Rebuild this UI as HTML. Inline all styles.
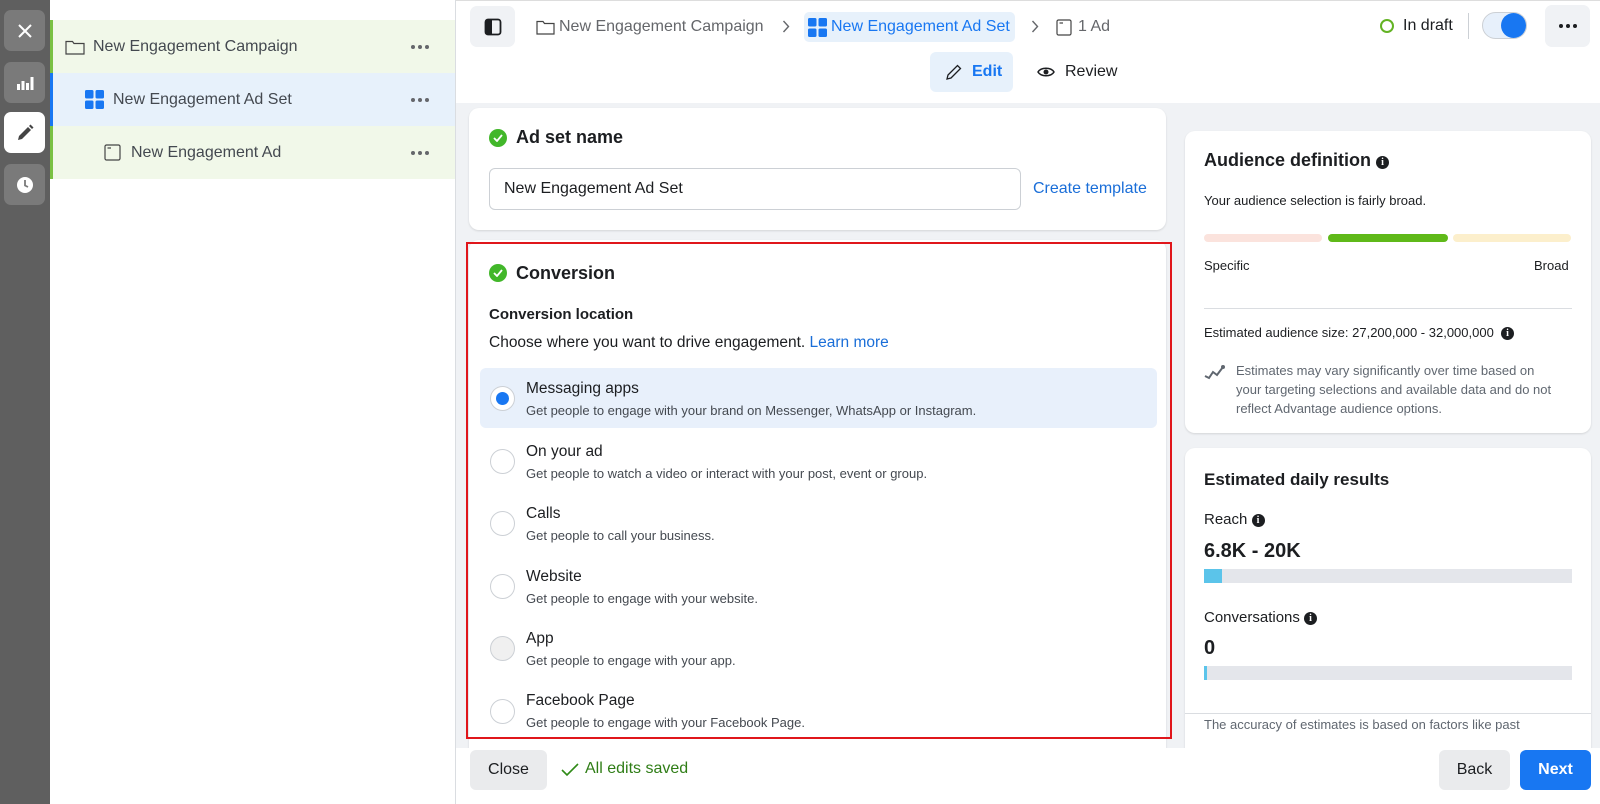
<!DOCTYPE html>
<html><head><meta charset="utf-8"><style>
*{box-sizing:border-box;margin:0;padding:0}
body{width:1600px;height:804px;overflow:hidden;font-family:"Liberation Sans",sans-serif;color:#1c1e21;background:#fff;position:relative}
.a{position:absolute}
.sb{left:0;top:0;width:50px;height:804px;background:#5f5f5f}
.sbb{left:4px;width:41px;height:41px;border-radius:7px;background:#7a7a7a;display:flex;align-items:center;justify-content:center}
.tree{left:50px;top:0;width:406px;height:804px;background:#fff;border-right:1px solid #dadde1}
.row{left:0;width:405px;font-size:16px;color:#444950;display:flex;align-items:center}
.dots{position:absolute;right:26px;top:50%;transform:translateY(-50%);display:flex;gap:3px}
.dots i{width:4px;height:4px;border-radius:50%;background:#65676b;display:block}
.main{left:456px;top:0;width:1144px;height:804px;background:#f0f2f5}
.hdr{left:456px;top:0;width:1144px;height:103px;background:#fff;border-top:1px solid #ddd}
.card{background:#fff;border-radius:10px;box-shadow:0 1px 2px rgba(0,0,0,.12)}
.t16{font-size:16px}
.chk{width:18px;height:18px;border-radius:50%;background:#42b72a;display:flex;align-items:center;justify-content:center}
.radio{width:25px;height:25px;border-radius:50%;border:1px solid #ccd0d5;background:#fff}
.opt .tt{font-size:15.5px;color:#1c1e21}
.opt .ds{font-size:13px;color:#444950}
.info{display:inline-block;width:13px;height:13px;border-radius:50%;background:#1c1e21;color:#fff;font-size:10px;font-weight:bold;text-align:center;line-height:13px;font-family:"Liberation Serif",serif;vertical-align:1px}
</style></head><body>
<div class="a main"></div>
<div class="a hdr"></div>
<div class="a sb"></div>
<div class="a sbb" style="top:10px"><svg width="16" height="16" viewBox="0 0 16 16"><path d="M2 2L14 14M14 2L2 14" stroke="#fff" stroke-width="2"/></svg></div>
<div class="a sbb" style="top:62px"><svg width="18" height="16" viewBox="0 0 18 16"><rect x="1" y="9" width="3" height="6" fill="#fff"/><rect x="5.5" y="6" width="3" height="9" fill="#fff"/><rect x="10" y="8" width="3" height="7" fill="#fff"/><rect x="14.5" y="2" width="3" height="13" fill="#fff"/></svg></div>
<div class="a sbb" style="top:112px;background:#fff"><svg width="18" height="18" viewBox="0 0 18 18"><path d="M2 16L3 12L12 3L15 6L6 15Z" fill="#444"/><path d="M13 2L14.5 .5L17.5 3.5L16 5Z" fill="#444"/></svg></div>
<div class="a sbb" style="top:164px"><svg width="18" height="18" viewBox="0 0 18 18"><circle cx="9" cy="9" r="8" fill="#fff"/><path d="M9 4V9.5L12 11" stroke="#7a7a7a" stroke-width="1.8" fill="none"/></svg></div>

<div class="a tree">
 <div class="a row" style="top:20px;height:53px;background:#f1f8e9;border-left:3px solid #7ac143;padding-left:12px">
  <svg width="20" height="16" viewBox="0 0 20 16"><path d="M1 2.5H7.5L9 4.5H19V15H1Z" fill="none" stroke="#444" stroke-width="1.2"/></svg>
  <span style="margin-left:8px">New Engagement Campaign</span><div class="dots"><i></i><i></i><i></i></div></div>
 <div class="a row" style="top:73px;height:53px;background:#e7f1fb;border-left:3px solid #1877f2;padding-left:32px">
  <svg width="19" height="19" viewBox="0 0 19 19"><rect x="0" y="0" width="8.5" height="8.5" rx="1.5" fill="#1877f2"/><rect x="10.5" y="0" width="8.5" height="8.5" rx="1.5" fill="#1877f2"/><rect x="0" y="10.5" width="8.5" height="8.5" rx="1.5" fill="#1877f2"/><rect x="10.5" y="10.5" width="8.5" height="8.5" rx="1.5" fill="#1877f2"/></svg>
  <span style="margin-left:9px">New Engagement Ad Set</span><div class="dots"><i></i><i></i><i></i></div></div>
 <div class="a row" style="top:126px;height:53px;background:#f1f8e9;border-left:3px solid #7ac143;padding-left:51px">
  <svg width="17" height="17" viewBox="0 0 17 17"><rect x="1" y="1" width="15" height="15" rx="1.5" fill="none" stroke="#444" stroke-width="1.2"/><path d="M3.5 4H7" stroke="#444" stroke-width="1.2"/></svg>
  <span style="margin-left:10px">New Engagement Ad</span><div class="dots"><i></i><i></i><i></i></div></div>
</div>

<!-- header -->
<div class="a" style="left:470px;top:6px;width:45px;height:41px;border-radius:7px;background:#f0f2f5;display:flex;align-items:center;justify-content:center"><svg width="18" height="18" viewBox="0 0 18 18"><rect x="1.5" y="1.5" width="15" height="15" rx="2.5" fill="none" stroke="#1c1e21" stroke-width="1.8"/><rect x="2" y="2" width="6" height="14" fill="#1c1e21"/></svg></div>
<div class="a t16" style="left:536px;top:16px;height:22px;display:flex;align-items:center;color:#65676b">
 <svg width="19" height="16" viewBox="0 0 19 16"><path d="M1 2.5H7L8.5 4.5H18V15H1Z" fill="none" stroke="#444" stroke-width="1.2"/></svg><span style="margin-left:4px">New Engagement Campaign</span></div>
<svg class="a" style="left:782px;top:20px" width="8" height="13" viewBox="0 0 8 13"><path d="M1.5 1L6.5 6.5L1.5 12" stroke="#65676b" stroke-width="1.4" fill="none"/></svg>
<div class="a t16" style="left:804px;top:12px;width:211px;height:30px;border-radius:5px;background:#e7f1fb;display:flex;align-items:center;padding-left:4px;color:#1877f2">
 <svg width="19" height="19" viewBox="0 0 19 19"><rect x="0" y="0" width="8.5" height="8.5" rx="1.5" fill="#1877f2"/><rect x="10.5" y="0" width="8.5" height="8.5" rx="1.5" fill="#1877f2"/><rect x="0" y="10.5" width="8.5" height="8.5" rx="1.5" fill="#1877f2"/><rect x="10.5" y="10.5" width="8.5" height="8.5" rx="1.5" fill="#1877f2"/></svg><span style="margin-left:4px">New Engagement Ad Set</span></div>
<svg class="a" style="left:1031px;top:20px" width="8" height="13" viewBox="0 0 8 13"><path d="M1.5 1L6.5 6.5L1.5 12" stroke="#65676b" stroke-width="1.4" fill="none"/></svg>
<div class="a t16" style="left:1056px;top:16px;height:22px;display:flex;align-items:center;color:#65676b">
 <svg width="16" height="17" viewBox="0 0 16 17"><rect x="1" y="1" width="14" height="15" rx="1.5" fill="none" stroke="#444" stroke-width="1.2"/><path d="M3.5 4H7" stroke="#444" stroke-width="1.2"/></svg><span style="margin-left:6px">1 Ad</span></div>

<div class="a" style="left:1380px;top:19px;width:14px;height:14px;border-radius:50%;border:2px solid #63b324"></div>
<div class="a t16" style="left:1403px;top:17px">In draft</div>
<div class="a" style="left:1468px;top:13px;width:1px;height:26px;background:#ccd0d5"></div>
<div class="a" style="left:1482px;top:12px;width:45px;height:27px;border-radius:14px;background:#e7f0fb;border:1px solid #ccd0d5"></div>
<div class="a" style="left:1501px;top:13px;width:25px;height:25px;border-radius:50%;background:#1877f2"></div>
<div class="a" style="left:1545px;top:5px;width:45px;height:42px;border-radius:7px;background:#f0f2f5;display:flex;align-items:center;justify-content:center;gap:3px"><i style="width:4px;height:4px;border-radius:50%;background:#1c1e21"></i><i style="width:4px;height:4px;border-radius:50%;background:#1c1e21"></i><i style="width:4px;height:4px;border-radius:50%;background:#1c1e21"></i></div>

<div class="a" style="left:930px;top:52px;width:83px;height:40px;border-radius:6px;background:#e7f1fb;display:flex;align-items:center;padding-left:15px;color:#1877f2;font-weight:bold;font-size:16px">
 <svg width="18" height="18" viewBox="0 0 18 18"><path d="M2 16L3 12L12.5 2.5L15.5 5.5L6 15Z" fill="none" stroke="#1c1e21" stroke-width="1.3"/></svg><span style="margin-left:9px">Edit</span></div>
<div class="a" style="left:1037px;top:63px;display:flex;align-items:center;font-size:16px">
 <svg width="18" height="14" viewBox="0 0 18 14"><path d="M1 7C4 2 14 2 17 7C14 12 4 12 1 7Z" fill="none" stroke="#1c1e21" stroke-width="1.5"/><circle cx="9" cy="7" r="2.5" fill="#1c1e21"/></svg><span style="margin-left:10px">Review</span></div>

<!-- card 1 -->
<div class="a card" style="left:469px;top:108px;width:697px;height:122px"></div>
<div class="a chk" style="left:489px;top:129px"><svg width="10" height="8" viewBox="0 0 10 8"><path d="M1 4L4 7L9 1" stroke="#fff" stroke-width="1.8" fill="none"/></svg></div>
<div class="a" style="left:516px;top:127px;font-size:18px;font-weight:bold">Ad set name</div>
<div class="a" style="left:489px;top:168px;width:532px;height:42px;border:1px solid #ccd0d5;border-radius:6px;font-size:16px;padding:11px 14px">New Engagement Ad Set</div>
<div class="a" style="left:1033px;top:180px;color:#1a6ed8;font-size:16px">Create template</div>

<!-- card 2 -->
<div class="a card" style="left:469px;top:240px;width:697px;height:520px"></div>
<div class="a" style="left:466px;top:242px;width:706px;height:497px;border:2px solid #e0161b"></div>
<div class="a chk" style="left:489px;top:264px"><svg width="10" height="8" viewBox="0 0 10 8"><path d="M1 4L4 7L9 1" stroke="#fff" stroke-width="1.8" fill="none"/></svg></div>
<div class="a" style="left:516px;top:263px;font-size:18px;font-weight:bold">Conversion</div>
<div class="a" style="left:489px;top:306px;font-size:15px;font-weight:bold">Conversion location</div>
<div class="a" style="left:489px;top:334px;font-size:15.5px">Choose where you want to drive engagement. <span style="color:#1a6ed8">Learn more</span></div>
<div class="a" style="left:480px;top:368px;width:677px;height:60px;border-radius:6px;background:#e8f0fb"></div>

<div class="a radio" style="left:490px;top:386px;border-color:#ccd0d5"></div>
<div class="a" style="left:496px;top:392px;width:13px;height:13px;border-radius:50%;background:#1877f2"></div>
<div class="a opt" style="left:526px;top:380px"><div class="tt">Messaging apps</div><div class="ds" style="margin-top:5px">Get people to engage with your brand on Messenger, WhatsApp or Instagram.</div></div>

<div class="a radio" style="left:490px;top:449px"></div>
<div class="a opt" style="left:526px;top:443px"><div class="tt">On your ad</div><div class="ds" style="margin-top:5px">Get people to watch a video or interact with your post, event or group.</div></div>
<div class="a radio" style="left:490px;top:511px"></div>
<div class="a opt" style="left:526px;top:505px"><div class="tt">Calls</div><div class="ds" style="margin-top:5px">Get people to call your business.</div></div>
<div class="a radio" style="left:490px;top:574px"></div>
<div class="a opt" style="left:526px;top:568px"><div class="tt">Website</div><div class="ds" style="margin-top:5px">Get people to engage with your website.</div></div>
<div class="a radio" style="left:490px;top:636px;background:#f0f0f0"></div>
<div class="a opt" style="left:526px;top:630px"><div class="tt">App</div><div class="ds" style="margin-top:5px">Get people to engage with your app.</div></div>
<div class="a radio" style="left:490px;top:699px"></div>
<div class="a opt" style="left:526px;top:692px"><div class="tt">Facebook Page</div><div class="ds" style="margin-top:5px">Get people to engage with your Facebook Page.</div></div>

<!-- right column -->
<div class="a card" style="left:1185px;top:131px;width:406px;height:302px"></div>
<div class="a" style="left:1204px;top:150px;font-size:18px;font-weight:bold">Audience definition <span class="info">i</span></div>
<div class="a" style="left:1204px;top:193px;font-size:13px">Your audience selection is fairly broad.</div>
<div class="a" style="left:1204px;top:234px;width:118px;height:8px;border-radius:4px;background:#fbe3dd"></div>
<div class="a" style="left:1328px;top:234px;width:120px;height:8px;border-radius:4px;background:#5fb919"></div>
<div class="a" style="left:1453px;top:234px;width:118px;height:8px;border-radius:4px;background:#fcefcc"></div>
<div class="a" style="left:1204px;top:258px;font-size:13px">Specific</div>
<div class="a" style="left:1534px;top:258px;font-size:13px">Broad</div>
<div class="a" style="left:1204px;top:308px;width:368px;height:1px;background:#dadde1"></div>
<div class="a" style="left:1204px;top:325px;font-size:13px">Estimated audience size: 27,200,000 - 32,000,000 &nbsp;<span class="info">i</span></div>
<svg class="a" style="left:1204px;top:364px" width="22" height="16" viewBox="0 0 22 16"><path d="M1 12L5 14L9 8L13 11L19 3" stroke="#606770" stroke-width="2" fill="none"/><circle cx="19" cy="3" r="2" fill="#606770"/></svg>
<div class="a" style="left:1236px;top:361px;font-size:13px;color:#606770;line-height:19px;width:316px">Estimates may vary significantly over time based on your targeting selections and available data and do not reflect Advantage audience options.</div>

<div class="a card" style="left:1185px;top:448px;width:406px;height:330px"></div>
<div class="a" style="left:1204px;top:470px;font-size:17px;font-weight:bold">Estimated daily results</div>
<div class="a" style="left:1204px;top:511px;font-size:15px">Reach <span class="info">i</span></div>
<div class="a" style="left:1204px;top:540px;font-size:20px;font-weight:bold">6.8K - 20K</div>
<div class="a" style="left:1204px;top:569px;width:368px;height:14px;background:#e4e6eb"></div>
<div class="a" style="left:1204px;top:569px;width:18px;height:14px;background:#5bc4ea"></div>
<div class="a" style="left:1204px;top:609px;font-size:15px">Conversations <span class="info">i</span></div>
<div class="a" style="left:1204px;top:637px;font-size:20px;font-weight:bold">0</div>
<div class="a" style="left:1204px;top:666px;width:368px;height:14px;background:#e4e6eb"></div>
<div class="a" style="left:1204px;top:666px;width:3px;height:14px;background:#5bc4ea"></div>
<div class="a" style="left:1185px;top:713px;width:406px;height:1px;background:#dadde1"></div>
<div class="a" style="left:1204px;top:717px;font-size:13px;color:#606770">The accuracy of estimates is based on factors like past</div>

<!-- footer -->
<div class="a" style="left:456px;top:748px;width:1144px;height:56px;background:#fff"></div>
<div class="a" style="left:470px;top:750px;width:77px;height:40px;border-radius:6px;background:#eaebed;font-size:16px;display:flex;align-items:center;justify-content:center">Close</div>
<svg class="a" style="left:561px;top:763px" width="18" height="14" viewBox="0 0 18 14"><path d="M1 7L6 12L17 1" stroke="#2f8a17" stroke-width="1.6" fill="none"/></svg>
<div class="a" style="left:585px;top:760px;font-size:16px;color:#2f7d16">All edits saved</div>
<div class="a" style="left:1439px;top:750px;width:71px;height:40px;border-radius:6px;background:#eaebed;font-size:16px;display:flex;align-items:center;justify-content:center">Back</div>
<div class="a" style="left:1520px;top:750px;width:71px;height:40px;border-radius:6px;background:#1877f2;color:#fff;font-weight:bold;font-size:16px;display:flex;align-items:center;justify-content:center">Next</div>
</body></html>
